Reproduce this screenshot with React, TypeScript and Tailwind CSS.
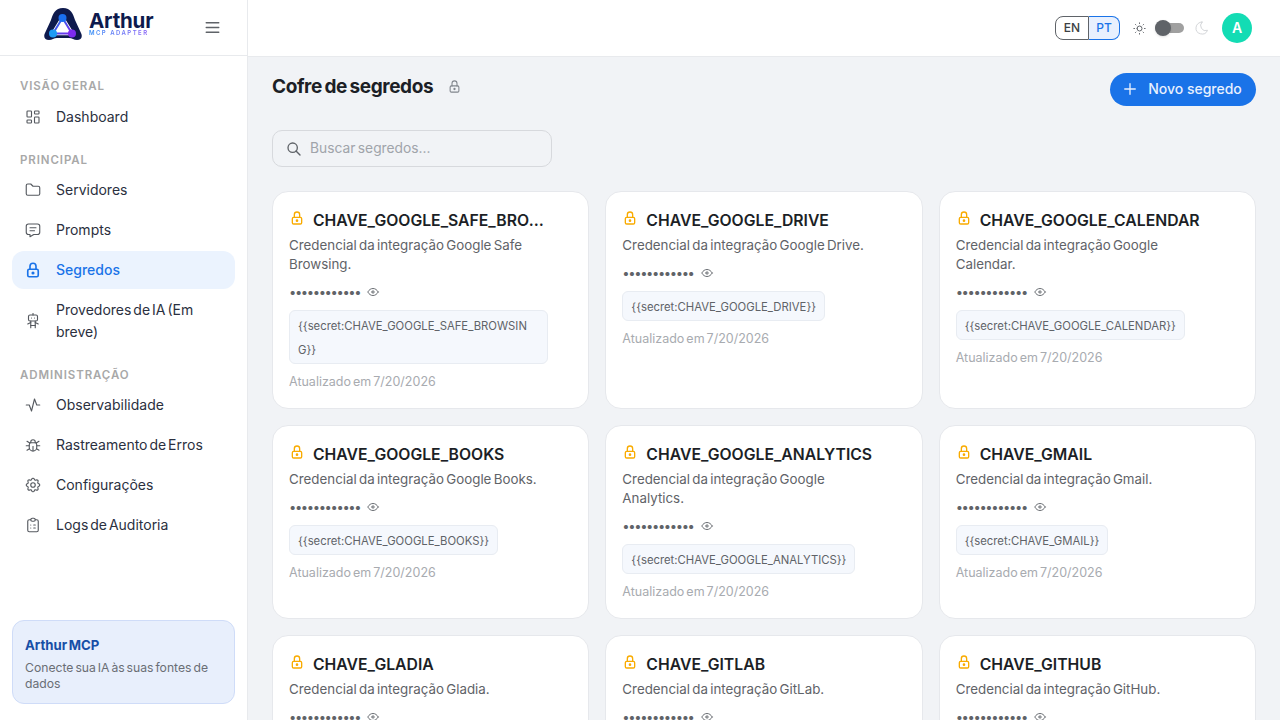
import {
  TbActivity,
  TbBug,
  TbClipboardList,
  TbEye,
  TbFolder,
  TbLayoutDashboard,
  TbLock,
  TbMenu2,
  TbMessage,
  TbMoon,
  TbPlus,
  TbRobot,
  TbSearch,
  TbSettings,
  TbSun,
} from "react-icons/tb";

const secrets = [
  { name: "CHAVE_GOOGLE_SAFE_BROWSING", desc: "Credencial da integração Google Safe Browsing." },
  { name: "CHAVE_GOOGLE_DRIVE", desc: "Credencial da integração Google Drive." },
  { name: "CHAVE_GOOGLE_CALENDAR", desc: "Credencial da integração Google Calendar." },
  { name: "CHAVE_GOOGLE_BOOKS", desc: "Credencial da integração Google Books." },
  { name: "CHAVE_GOOGLE_ANALYTICS", desc: "Credencial da integração Google Analytics." },
  { name: "CHAVE_GMAIL", desc: "Credencial da integração Gmail." },
  { name: "CHAVE_GLADIA", desc: "Credencial da integração Gladia." },
  { name: "CHAVE_GITLAB", desc: "Credencial da integração GitLab." },
  { name: "CHAVE_GITHUB", desc: "Credencial da integração GitHub." },
];

function Logo() {
  return (
    <div className="mb-2 flex items-center gap-[7px] [word-spacing:0]">
      <svg width="38" height="32" viewBox="0 0 38 32">
        <defs>
          <linearGradient id="tri" x1="0" y1="0" x2="1" y2="1">
            <stop offset="0" stopColor="#1a73e8" />
            <stop offset="1" stopColor="#7c2bf0" />
          </linearGradient>
        </defs>
        <path
          d="M19 0C11 0 9 6 7 12L1 25c-2 4 0 7 4 7 3 0 5-2 8-2h12c3 0 5 2 8 2 4 0 6-3 4-7l-6-13C29 6 27 0 19 0Z"
          fill="#0e1a4d"
        />
        <path d="M18.500 10L9 25.500H28Z" fill="#fff" stroke="#fff" strokeWidth="3.500" strokeLinejoin="round" />
        <path d="M18.500 10L9 25.500H28Z" fill="#fff" stroke="url(#tri)" strokeWidth="2" strokeLinejoin="round" />
        <circle cx="18.500" cy="10" r="4" fill="#1a6ff0" />
        <circle cx="9" cy="25.500" r="4" fill="#1e9bf5" />
        <circle cx="28" cy="25.500" r="4" fill="#7c2bf0" />
      </svg>
      <div className="flex flex-col">
        <span className="text-[20.500px] leading-[17px] font-bold text-[#0e1a4d] tracking-[-0.2px]">Arthur</span>
        <span className="text-[6px] leading-[7px] font-semibold tracking-[1.450px] bg-gradient-to-r from-[#2a8cf5] to-[#8b5cf6] bg-clip-text text-transparent">
          MCP ADAPTER
        </span>
      </div>
    </div>
  );
}

function NavLabel({ children, className }: { children: string; className: string }) {
  return (
    <p className={`px-2 text-[11.500px] leading-4 font-semibold tracking-[0.9px] text-[#a8a8a8] ${className}`}>
      {children}
    </p>
  );
}

function NavItem({ icon: Icon, label, active }: { icon: any; label: string; active?: boolean }) {
  return (
    <div
      className={`flex items-center gap-[14px] rounded-xl px-3 py-2 text-sm leading-[22px] [word-spacing:-2px] ${
        active ? "bg-[#ebf3fe] text-[#1a73e8] font-medium" : "text-[#2b3040]"
      }`}
    >
      <Icon size={18} strokeWidth={active ? 2.2 : 1.5} className={`shrink-0 ${active ? "text-[#1a73e8]" : "text-[#55595f]"}`} />
      <span>{label}</span>
    </div>
  );
}

function SecretCard({ name, desc }: { name: string; desc: string }) {
  return (
    <div className="rounded-2xl border border-[#e6e8ec] bg-white p-4">
      <div className="pr-6">
        <div className="flex h-6 items-start gap-2">
          <TbLock size={16} strokeWidth={2} className="mt-[2px] shrink-0 text-[#f9ab00]" />
          <h3 className="truncate pt-px text-[15.750px] leading-6 font-semibold text-[#1c1f26]">{name}</h3>
        </div>
        <p className="mt-1 text-[13.350px] leading-[19px] text-[#5f6368]">{desc}</p>
        <div className="mt-2 flex h-5 items-center gap-[6px]">
          <span className="text-[13px] leading-5 tracking-[-1.380px] text-[#5f6368]">••••••••••••</span>
          <TbEye size={14} strokeWidth={1.6} className="text-[#5f6368]" />
        </div>
        <div className="mt-2 inline-block max-w-full break-all rounded-md border border-[#e8ecf2] bg-[#f5f8fd] px-2 pt-[3px] pb-px text-[11.300px] leading-6 text-[#5f6368]">
          {`{{secret:${name}}}`}
        </div>
        <p className="mt-2 text-[12.500px] leading-5 text-[#a8abb0]">Atualizado em 7/20/2026</p>
      </div>
    </div>
  );
}

export default function App() {
  return (
    <div className="flex h-screen overflow-hidden bg-[#f1f3f6] font-['Inter',sans-serif] [word-spacing:-1.500px]">
      {/* Sidebar */}
      <aside className="flex w-[248px] shrink-0 flex-col border-r border-[#e8eaed] bg-white">
        <div className="flex h-[56px] items-center justify-between border-b border-[#e8eaed] pl-[44px] pr-[25px]">
          <Logo />
          <TbMenu2 size={19} strokeWidth={1.6} className="text-[#5f6368]" />
        </div>
        <nav className="flex flex-1 flex-col gap-[2px] px-3">
          <NavLabel className="mt-[22px] mb-[2px]">VISÃO GERAL</NavLabel>
          <NavItem icon={TbLayoutDashboard} label="Dashboard" />
          <NavLabel className="mt-[14px] mb-px">PRINCIPAL</NavLabel>
          <NavItem icon={TbFolder} label="Servidores" />
          <NavItem icon={TbMessage} label="Prompts" />
          <NavItem icon={TbLock} label="Segredos" active />
          <NavItem icon={TbRobot} label="Provedores de IA (Em breve)" />
          <NavLabel className="mt-[14px] mb-px">ADMINISTRAÇÃO</NavLabel>
          <NavItem icon={TbActivity} label="Observabilidade" />
          <NavItem icon={TbBug} label="Rastreamento de Erros" />
          <NavItem icon={TbSettings} label="Configurações" />
          <NavItem icon={TbClipboardList} label="Logs de Auditoria" />
        </nav>
        <div className="mx-3 mb-4 h-[84px] rounded-xl border border-[#cfdcf8] bg-[#e8effc] px-3 py-[14px]">
          <p className="text-[13.200px] leading-5 font-bold text-[#174ea6]">Arthur MCP</p>
          <p className="mt-[5px] text-[12.200px] leading-4 text-[#6a6e75]">Conecte sua IA às suas fontes de dados</p>
        </div>
      </aside>

      <div className="flex min-w-0 flex-1 flex-col">
        {/* Header */}
        <header className="flex h-[57px] shrink-0 items-center justify-end border-b border-[#e8eaed] bg-white pr-7">
          <div className="flex h-6 text-xs font-medium">
            <span className="flex w-[34px] items-center justify-center rounded-l-lg border border-[#5f6368] text-[#3c4043]">EN</span>
            <span className="flex w-[31px] items-center justify-center rounded-r-lg border border-l-0 border-[#1a73e8] bg-[#e8f0fe] text-[#1a73e8]">PT</span>
          </div>
          <TbSun size={15} strokeWidth={1.6} className="ml-3 text-[#5f6368]" />
          <div className="relative ml-[8px] h-[10px] w-[29px] rounded-full bg-[#a0a0a0]">
            <div className="absolute left-0 top-[-3px] h-4 w-4 rounded-full bg-[#5f6368] shadow-sm"></div>
          </div>
          <TbMoon size={16} strokeWidth={1.5} className="ml-[10px] text-[#d4d6d9]" />
          <div className="ml-3 flex h-[30px] w-[30px] items-center justify-center rounded-full bg-[#13dcb4] text-sm font-semibold text-white">A</div>
        </header>

        {/* Content */}
        <main className="flex-1 overflow-hidden pl-6 pr-6">
          <div className="flex items-start justify-between pt-4">
            <div className="flex items-center gap-[14px]">
              <h1 className="text-[19px] leading-7 font-bold tracking-[-0.4px] text-[#1c1f26]">Cofre de segredos</h1>
              <TbLock size={15} strokeWidth={1.7} className="mb-[2px] text-[#80858c]" />
            </div>
            <button className="flex h-[33px] w-[146px] items-center justify-center gap-[9px] rounded-full bg-[#1a73e8] pr-[3px] pb-px text-sm font-medium text-[#e8f0fe]">
              <TbPlus size={18} strokeWidth={1.8} />
              Novo segredo
            </button>
          </div>
          <div className="mt-6 flex h-[37px] w-[280px] items-center gap-2 rounded-[10px] border border-[#d7d9dd] pl-[13px]">
            <TbSearch size={16} className="text-[#5f6368]" />
            <span className="text-[13.800px] text-[#a0a4aa]">Buscar segredos...</span>
          </div>
          <div className="mt-6 grid grid-cols-3 gap-4">
            {secrets.map((s) => (
              <SecretCard key={s.name} name={s.name} desc={s.desc} />
            ))}
          </div>
        </main>
      </div>
    </div>
  );
}
